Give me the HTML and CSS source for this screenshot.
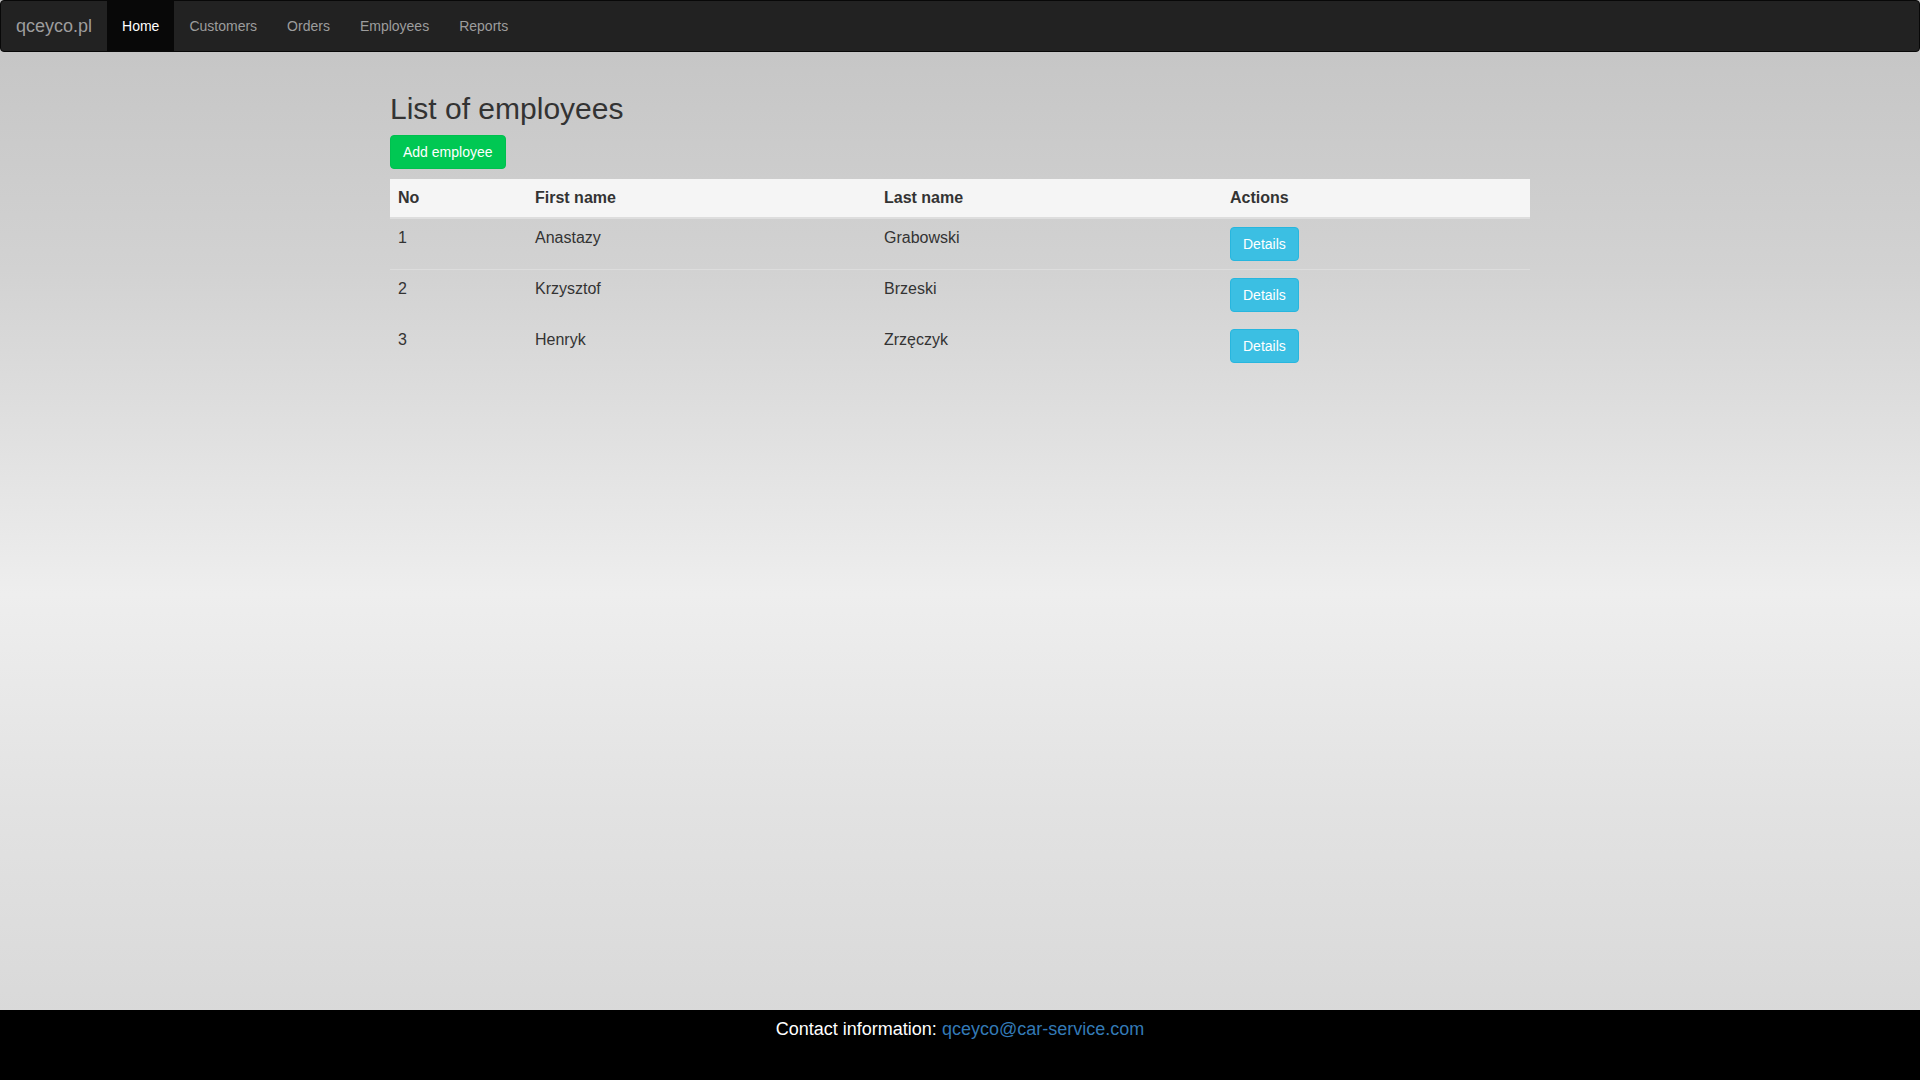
FILE: index.html
```html
<!DOCTYPE html>
<html lang="en">
<head>
<meta charset="utf-8">
<title>List of employees</title>
<link rel="stylesheet" href="styles.css">
</head>
<body>
<div class="page">
  <nav class="navbar">
    <a class="brand" href="#">qceyco.pl</a>
    <ul class="nav">
      <li><a class="active" href="#">Home</a></li>
      <li><a href="#">Customers</a></li>
      <li><a href="#">Orders</a></li>
      <li><a href="#">Employees</a></li>
      <li><a href="#">Reports</a></li>
    </ul>
  </nav>
  <main class="container">
    <h2 class="title">List of employees</h2>
    <div class="actions-bar"><a class="btn btn-add" href="#">Add employee</a></div>
    <table class="table">
      <colgroup>
        <col class="c-no">
        <col class="c-first">
        <col class="c-last">
        <col class="c-actions">
      </colgroup>
      <thead>
        <tr><th>No</th><th>First name</th><th>Last name</th><th>Actions</th></tr>
      </thead>
      <tbody>
        <tr><td>1</td><td>Anastazy</td><td>Grabowski</td><td><a class="btn btn-info" href="#">Details</a></td></tr>
        <tr class="sep"><td>2</td><td>Krzysztof</td><td>Brzeski</td><td><a class="btn btn-info" href="#">Details</a></td></tr>
        <tr><td>3</td><td>Henryk</td><td>Zrzęczyk</td><td><a class="btn btn-info" href="#">Details</a></td></tr>
      </tbody>
    </table>
  </main>
  <footer class="footer">
    Contact information: <a href="#">qceyco@car-service.com</a>
  </footer>
</div>
</body>
</html>
```
FILE: styles.css
```css
* { box-sizing: border-box; }
html, body { margin: 0; padding: 0; }
body {
  font-family: "Liberation Sans", Arial, sans-serif;
  font-size: 14px;
  line-height: 1.42857;
  color: #333;
  background: #000;
}
.page {
  min-height: 100vh;
  display: flex;
  flex-direction: column;
  background: linear-gradient(to bottom, #c3c3c3 0%, #d2d2d2 25%, #eeeeee 55%, #e2e2e2 75%, #d6d6d6 100%);
}
a { text-decoration: none; }

.navbar {
  display: flex;
  align-items: stretch;
  height: 52px;
  background: #222;
  border: 1px solid #080808;
  border-radius: 4px;
  margin-bottom: 20px;
}
.brand {
  display: block;
  font-size: 18px;
  line-height: 20px;
  padding: 15px;
  color: #9d9d9d;
}
.nav {
  display: flex;
  list-style: none;
  margin: 0;
  padding: 0;
}
.nav a {
  display: block;
  font-size: 14px;
  line-height: 20px;
  padding: 15px;
  color: #9d9d9d;
}
.nav a.active {
  color: #fff;
  background: #080808;
}

.container {
  flex: 1;
  width: 1170px;
  margin: 0 auto;
  padding: 0 15px;
}
.title {
  font-size: 30px;
  font-weight: 500;
  line-height: 1.1;
  margin: 20px 0 10px;
  color: #333;
}
.actions-bar { display: flex; }
.btn {
  display: inline-block;
  font-size: 14px;
  line-height: 20px;
  padding: 6px 12px;
  border: 1px solid transparent;
  border-radius: 4px;
  color: #fff;
  white-space: nowrap;
}
.btn-add {
  background: #00c853;
  border-color: #00c04f;
}
.btn-info {
  background: #3bbfe3;
  border-color: #28b6de;
}

.table {
  width: 1140px;
  margin-top: 10px;
  border-collapse: collapse;
  border-spacing: 0;
  table-layout: fixed;
  font-size: 16px;
}
.c-no { width: 137px; }
.c-first { width: 349px; }
.c-last { width: 346px; }
.c-actions { width: 308px; }
.table th, .table td {
  padding: 8px;
  text-align: left;
  vertical-align: top;
  line-height: 22px;
}
.table th {
  background: #f5f5f5;
  font-weight: bold;
  border-bottom: 2px solid #ddd;
}
.table td {
  border-top: 1px solid transparent;
}
.table tr.sep td { border-top-color: #ddd; }

.footer {
  height: 70px;
  background: #000;
  color: #fff;
  text-align: center;
  font-size: 18px;
  line-height: 1.42857;
  padding-top: 7px;
}
.footer a { color: #337ab7; }
```
